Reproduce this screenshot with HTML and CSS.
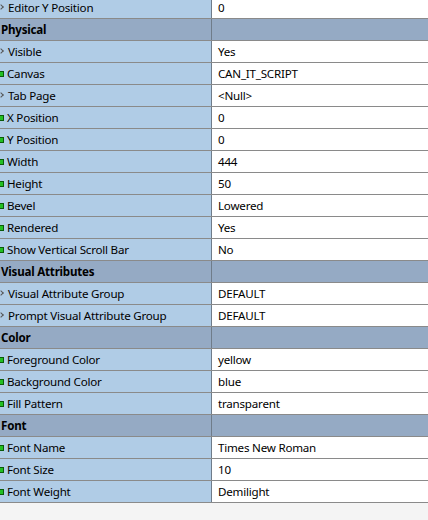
FILE: index.html
```html
<!DOCTYPE html>
<html>
<head>
<meta charset="utf-8">
<link rel="stylesheet" href="styles.css">
</head>
<body>
<div class="grid">
  <div class="row first"><div class="name"><span class="ic arrow"></span>Editor Y Position</div><div class="val">0</div></div>
  <div class="row head"><div class="name">Physical</div><div class="val"></div></div>
  <div class="row"><div class="name"><span class="ic arrow"></span>Visible</div><div class="val">Yes</div></div>
  <div class="row"><div class="name"><span class="ic sq"></span>Canvas</div><div class="val">CAN_IT_SCRIPT</div></div>
  <div class="row"><div class="name"><span class="ic arrow"></span>Tab Page</div><div class="val">&lt;Null&gt;</div></div>
  <div class="row"><div class="name"><span class="ic sq"></span>X Position</div><div class="val">0</div></div>
  <div class="row"><div class="name"><span class="ic sq"></span>Y Position</div><div class="val">0</div></div>
  <div class="row"><div class="name"><span class="ic sq"></span>Width</div><div class="val">444</div></div>
  <div class="row"><div class="name"><span class="ic sq"></span>Height</div><div class="val">50</div></div>
  <div class="row"><div class="name"><span class="ic sq"></span>Bevel</div><div class="val">Lowered</div></div>
  <div class="row"><div class="name"><span class="ic sq"></span>Rendered</div><div class="val">Yes</div></div>
  <div class="row"><div class="name"><span class="ic sq"></span>Show Vertical Scroll Bar</div><div class="val">No</div></div>
  <div class="row head"><div class="name">Visual Attributes</div><div class="val"></div></div>
  <div class="row"><div class="name"><span class="ic arrow"></span>Visual Attribute Group</div><div class="val">DEFAULT</div></div>
  <div class="row"><div class="name"><span class="ic arrow"></span>Prompt Visual Attribute Group</div><div class="val">DEFAULT</div></div>
  <div class="row head"><div class="name">Color</div><div class="val"></div></div>
  <div class="row"><div class="name"><span class="ic sq"></span>Foreground Color</div><div class="val">yellow</div></div>
  <div class="row"><div class="name"><span class="ic sq"></span>Background Color</div><div class="val">blue</div></div>
  <div class="row"><div class="name"><span class="ic sq"></span>Fill Pattern</div><div class="val">transparent</div></div>
  <div class="row head"><div class="name">Font</div><div class="val"></div></div>
  <div class="row"><div class="name"><span class="ic sq"></span>Font Name</div><div class="val">Times New Roman</div></div>
  <div class="row"><div class="name"><span class="ic sq"></span>Font Size</div><div class="val">10</div></div>
  <div class="row"><div class="name"><span class="ic sq"></span>Font Weight</div><div class="val">Demilight</div></div>
</div>
</body>
</html>
```
FILE: styles.css
```css
html, body {
  margin: 0;
  padding: 0;
  background: #f4f4f4;
  overflow: hidden;
}
body {
  font-family: "Noto Sans", "Open Sans", sans-serif;
  font-size: 11.6px;
  letter-spacing: -0.22px;
  color: #000;
}
.grid {
  display: flex;
  flex-direction: column;
  margin-top: -3px;
  width: 428px;
}
.row {
  display: grid;
  grid-template-columns: 212px 1fr;
  height: 21px;
  border-bottom: 1px solid #8a8a8a;
}
.name {
  background: #b0cce6;
  border-right: 1px solid #6f7c8a;
  display: flex;
  align-items: center;
  padding-left: 1px;
  white-space: nowrap;
  overflow: hidden;
}
.val {
  background: #fff;
  display: flex;
  align-items: center;
  padding-left: 6px;
  white-space: nowrap;
}
.head .name,
.head .val {
  background: #95aac4;
}
.head .name {
  font-weight: bold;
  padding-left: 1px;
}
.ic {
  display: inline-block;
  flex: none;
  margin-right: 3px;
}
.sq {
  width: 3px;
  height: 4px;
  background: #22c022;
  border: 1px solid #0a5a0a;
  border-left: none;
  margin-left: -1px;
}
.arrow {
  width: 4px;
  height: 5px;
  position: relative;
  margin-left: 0;
}
.arrow::before {
  content: "";
  position: absolute;
  left: -2px;
  top: 0;
  width: 3px;
  height: 3px;
  border-right: 1px solid #555;
  border-bottom: 1px solid #555;
  transform: rotate(-45deg);
}
```
